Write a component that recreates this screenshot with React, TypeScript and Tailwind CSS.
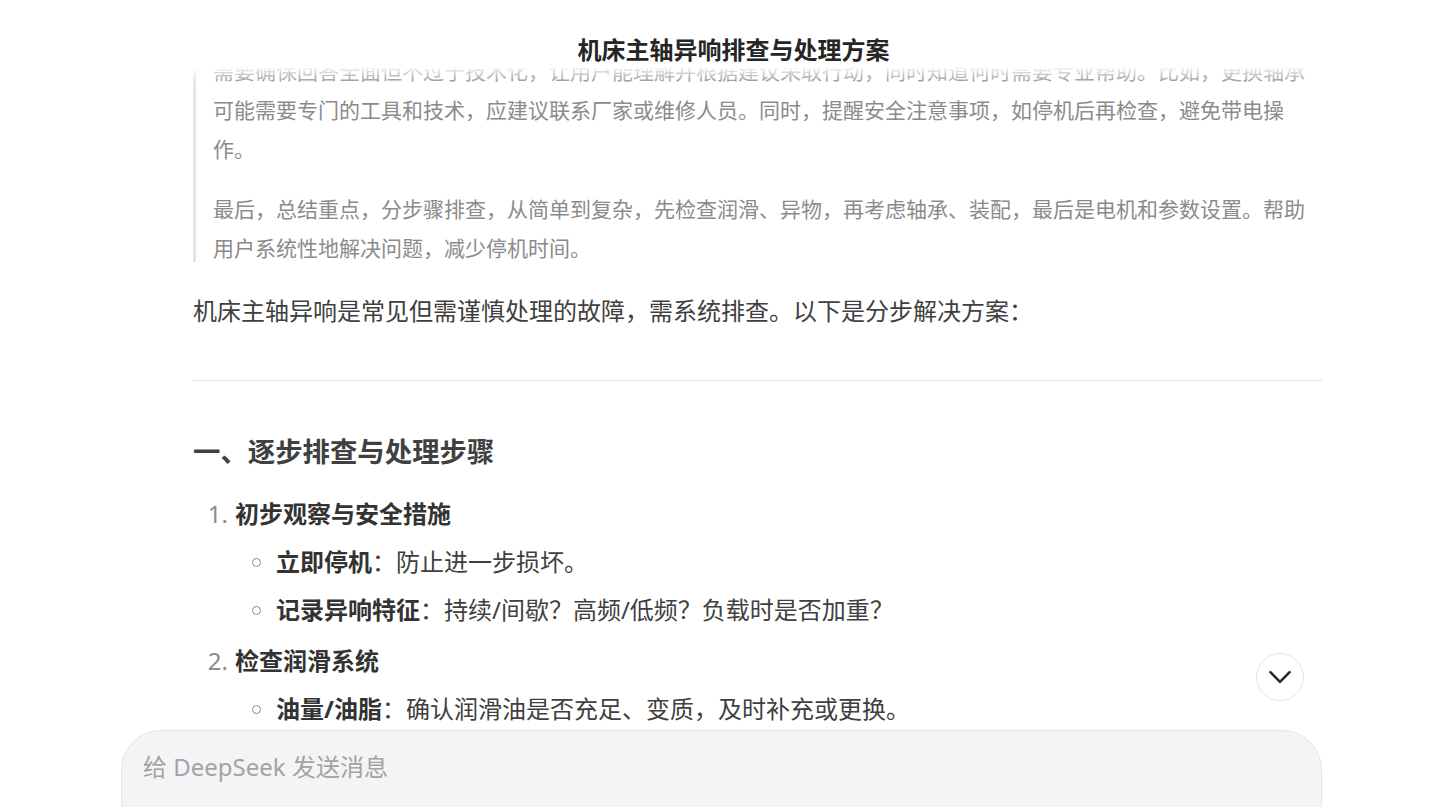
import React from 'react';

const font = { fontFamily: '"Noto Sans", "Noto Sans CJK SC", sans-serif' };

const steps = [
  {
    title: '初步观察与安全措施',
    items: [
      { term: '立即停机', text: '防止进一步损坏。' },
      { term: '记录异响特征', text: '持续/间歇？高频/低频？负载时是否加重？' },
    ],
  },
  {
    title: '检查润滑系统',
    items: [{ term: '油量/油脂', text: '确认润滑油是否充足、变质，及时补充或更换。' }],
  },
];

export default function App() {
  return (
    <div className="h-screen w-full overflow-hidden bg-white flex flex-col" style={font}>
      {/* Header */}
      <header className="h-[68px] shrink-0 flex justify-center pt-[33px] pl-[32px]">
        <h1 className="text-[24px] leading-[34px] font-bold text-[#262626]">机床主轴异响排查与处理方案</h1>
      </header>

      {/* Messages */}
      <div className="flex-1 min-h-0 overflow-hidden relative">
        <div className="absolute top-0 inset-x-0 h-[16px] bg-gradient-to-b from-white/90 to-transparent z-10" />
        <div className="ml-[121px] w-[1201px] relative h-full">
          <div className="ml-[72px] mt-[-16.5px]">
            {/* Reasoning */}
            <div className="flex flex-col border-l-[3px] border-[#e5e5e5] pl-[17px] text-[21px] leading-[39px] text-[#8b8b8b] whitespace-nowrap">
              <p>
                需要确保回答全面但不过于技术化，让用户能理解并根据建议采取行动，同时知道何时需要专业帮助。比如，更换轴承
                <br />
                可能需要专门的工具和技术，应建议联系厂家或维修人员。同时，提醒安全注意事项，如停机后再检查，避免带电操
                <br />
                作。
              </p>
              <p className="mt-[21px] mb-[-6px]">
                最后，总结重点，分步骤排查，从简单到复杂，先检查润滑、异物，再考虑轴承、装配，最后是电机和参数设置。帮助
                <br />
                用户系统性地解决问题，减少停机时间。
              </p>
            </div>

            {/* Answer */}
            <p className="mt-[28.5px] text-[24px] leading-[42px] text-[#404040]">
              机床主轴异响是常见但需谨慎处理的故障，需系统排查。以下是分步解决方案：
            </p>
            <hr className="mt-[48px] border-0 border-t border-[#e5e5e5]" />

            <h2 className="mt-[51px] text-[27.4px] leading-[40px] font-bold text-[#404040]">一、逐步排查与处理步骤</h2>

            <ol className="mt-[21px] text-[24px] leading-[42px] text-[#404040]">
              {steps.map((s, i) => (
                <li key={s.title} className={i > 0 ? 'mt-[9px]' : ''}>
                  <div className="flex">
                    <span className="w-[42px] shrink-0 text-right pr-[7px] text-[#8b8b8b]">{i + 1}.</span>
                    <strong className="font-bold text-[#333333]">{s.title}</strong>
                  </div>
                  <ul>
                    {s.items.map((it) => (
                      <li key={it.term} className="mt-[6px] flex items-center pl-[59px]">
                        <span className="w-[9px] h-[9px] rounded-full border border-[#8b8b8b] shrink-0 mr-[15px]" />
                        <span>
                          <strong className="font-bold text-[#333333]">{it.term}</strong>：{it.text}
                        </span>
                      </li>
                    ))}
                  </ul>
                </li>
              ))}
            </ol>
          </div>

          <button className="absolute right-[18px] bottom-[29px] translate-y-[16px] w-[48px] h-[48px] rounded-full border border-[#e5e5e5] bg-white flex items-center justify-center">
            <svg width="48" height="48" viewBox="0 0 48 48" fill="none">
              <path d="M14 19 L24 29 L34 19" stroke="#262626" strokeWidth="2.6" strokeLinecap="round" strokeLinejoin="round" />
            </svg>
          </button>
        </div>
      </div>

      {/* Composer */}
      <div className="h-[77px] shrink-0">
        <div className="ml-[121px] w-[1201px] h-[112px] rounded-[40px] bg-[#f3f4f6] border border-[#e2e5ea] px-[21px] pt-[19px]">
          <div className="text-[24px] leading-[34px] text-[#a3a3a3]">给 DeepSeek 发送消息</div>
        </div>
      </div>
    </div>
  );
}
